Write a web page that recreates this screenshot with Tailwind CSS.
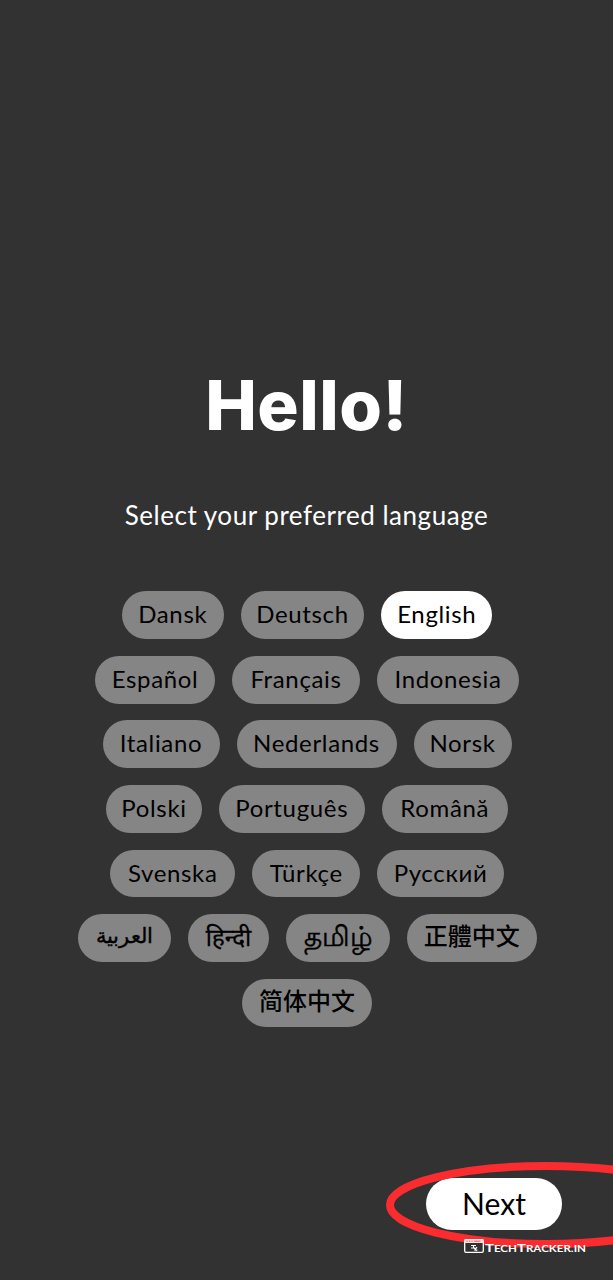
<!DOCTYPE html>
<html lang="en">
<head>
<meta charset="utf-8">
<title>Select language</title>
<script src="https://cdn.jsdelivr.net/npm/@tailwindcss/browser@4"></script>
</head>
<body class="bg-[#323232]">
<main class="relative flex h-[1280px] w-[613px] flex-col items-center overflow-hidden bg-[#323232] font-[Lato,'Noto_Sans','Noto_Sans_CJK_TC',sans-serif] text-white">
  <h1 class="mt-[360px] flex h-[90px] items-center justify-center whitespace-nowrap font-[Inter,sans-serif] text-[69px] font-extrabold leading-[90px] tracking-[0.5px]"><span>Hello!</span></h1>
  <p class="mt-[45px] flex h-[40px] items-center justify-center whitespace-nowrap text-[26px] leading-[40px] tracking-[0.53px]"><span>Select your preferred language</span></p>
  <div class="mt-[56px] flex flex-col items-center gap-[16.75px] whitespace-nowrap pl-px text-[24px] leading-[45px] tracking-[0.65px] text-black *:flex *:gap-[17px] *:*:flex *:*:h-[47.900px] *:*:justify-center *:*:rounded-full *:*:bg-[#858585]">
    <div>
      <div class="w-[102px]"><span>Dansk</span></div>
      <div class="w-[123.5px]"><span>Deutsch</span></div>
      <div class="w-[111px] bg-white!"><span>English</span></div>
    </div>
    <div>
      <div class="w-[120px]"><span>Español</span></div>
      <div class="w-[128px]"><span>Français</span></div>
      <div class="w-[142px]"><span>Indonesia</span></div>
    </div>
    <div>
      <div class="w-[117px]"><span>Italiano</span></div>
      <div class="w-[160px]"><span>Nederlands</span></div>
      <div class="w-[98px]"><span>Norsk</span></div>
    </div>
    <div>
      <div class="w-[96px]"><span>Polski</span></div>
      <div class="w-[145.5px]"><span>Português</span></div>
      <div class="w-[126.5px]"><span>Română</span></div>
    </div>
    <div>
      <div class="w-[125px]"><span>Svenska</span></div>
      <div class="w-[108px]"><span>Türkçe</span></div>
      <div class="w-[126.5px]"><span>Русский</span></div>
    </div>
    <div>
      <div class="w-[93.5px] text-[20.5px] leading-[43px] tracking-normal"><span lang="ar" class="[-webkit-text-stroke:0.4px_black]">العربية</span></div>
      <div class="w-[81px] tracking-normal"><span lang="hi" class="[-webkit-text-stroke:0.3px_black]">हिन्दी</span></div>
      <div class="w-[104px] text-[27.5px] leading-[44px] tracking-normal"><span lang="ta" class="[-webkit-text-stroke:0.5px_black]">தமிழ்</span></div>
      <div class="w-[129.5px] leading-[41px] tracking-normal"><span lang="zh-Hant" class="font-['Noto_Sans_CJK_TC',sans-serif] font-medium">正體中文</span></div>
    </div>
    <div>
      <div class="w-[129.5px] leading-[41px] tracking-normal"><span lang="zh-Hans" class="font-['Noto_Sans_CJK_SC',sans-serif] font-medium">简体中文</span></div>
    </div>
  </div>
  <button class="mt-[151px] mr-[51px] flex h-[52px] w-[136px] justify-center self-end rounded-full bg-white text-[30px] leading-[50px] text-black"><span>Next</span></button>
  <svg class="absolute left-0 top-[1150px]" width="613" height="130" viewBox="0 1150 613 130" fill="none">
    <ellipse cx="546" cy="1205" rx="156" ry="39" stroke="#fb2c30" stroke-width="8"/>
    <rect x="464.7" y="1239.7" width="18.6" height="12.6" rx="1.3" fill="#323232" stroke="#fff" stroke-width="1.3"/>
    <path d="M464.5 1239.5h19v3.5h-19z" fill="#fbdcdc"/>
    <path d="M466.5 1241.2h1.2m1.3 0h1.2m1.3 0h1.2m1.3 0h6.5" stroke="#e2565a"/>
    <path d="M471 1245.500h5m-2.500 0v2l3 3.500m-5.500-3h4.500m1.500-1-2 3h2.500" stroke="#fff" stroke-width="1.1"/>
    <text x="485" y="1251.500" textLength="101" lengthAdjust="spacingAndGlyphs" fill="#fff" font-family="Lato, sans-serif" font-weight="700"><tspan font-size="11.500">T</tspan><tspan font-size="9">ECH</tspan><tspan font-size="11.500">T</tspan><tspan font-size="9">RACKER.IN</tspan></text>
  </svg>
</main>
</body>
</html>
